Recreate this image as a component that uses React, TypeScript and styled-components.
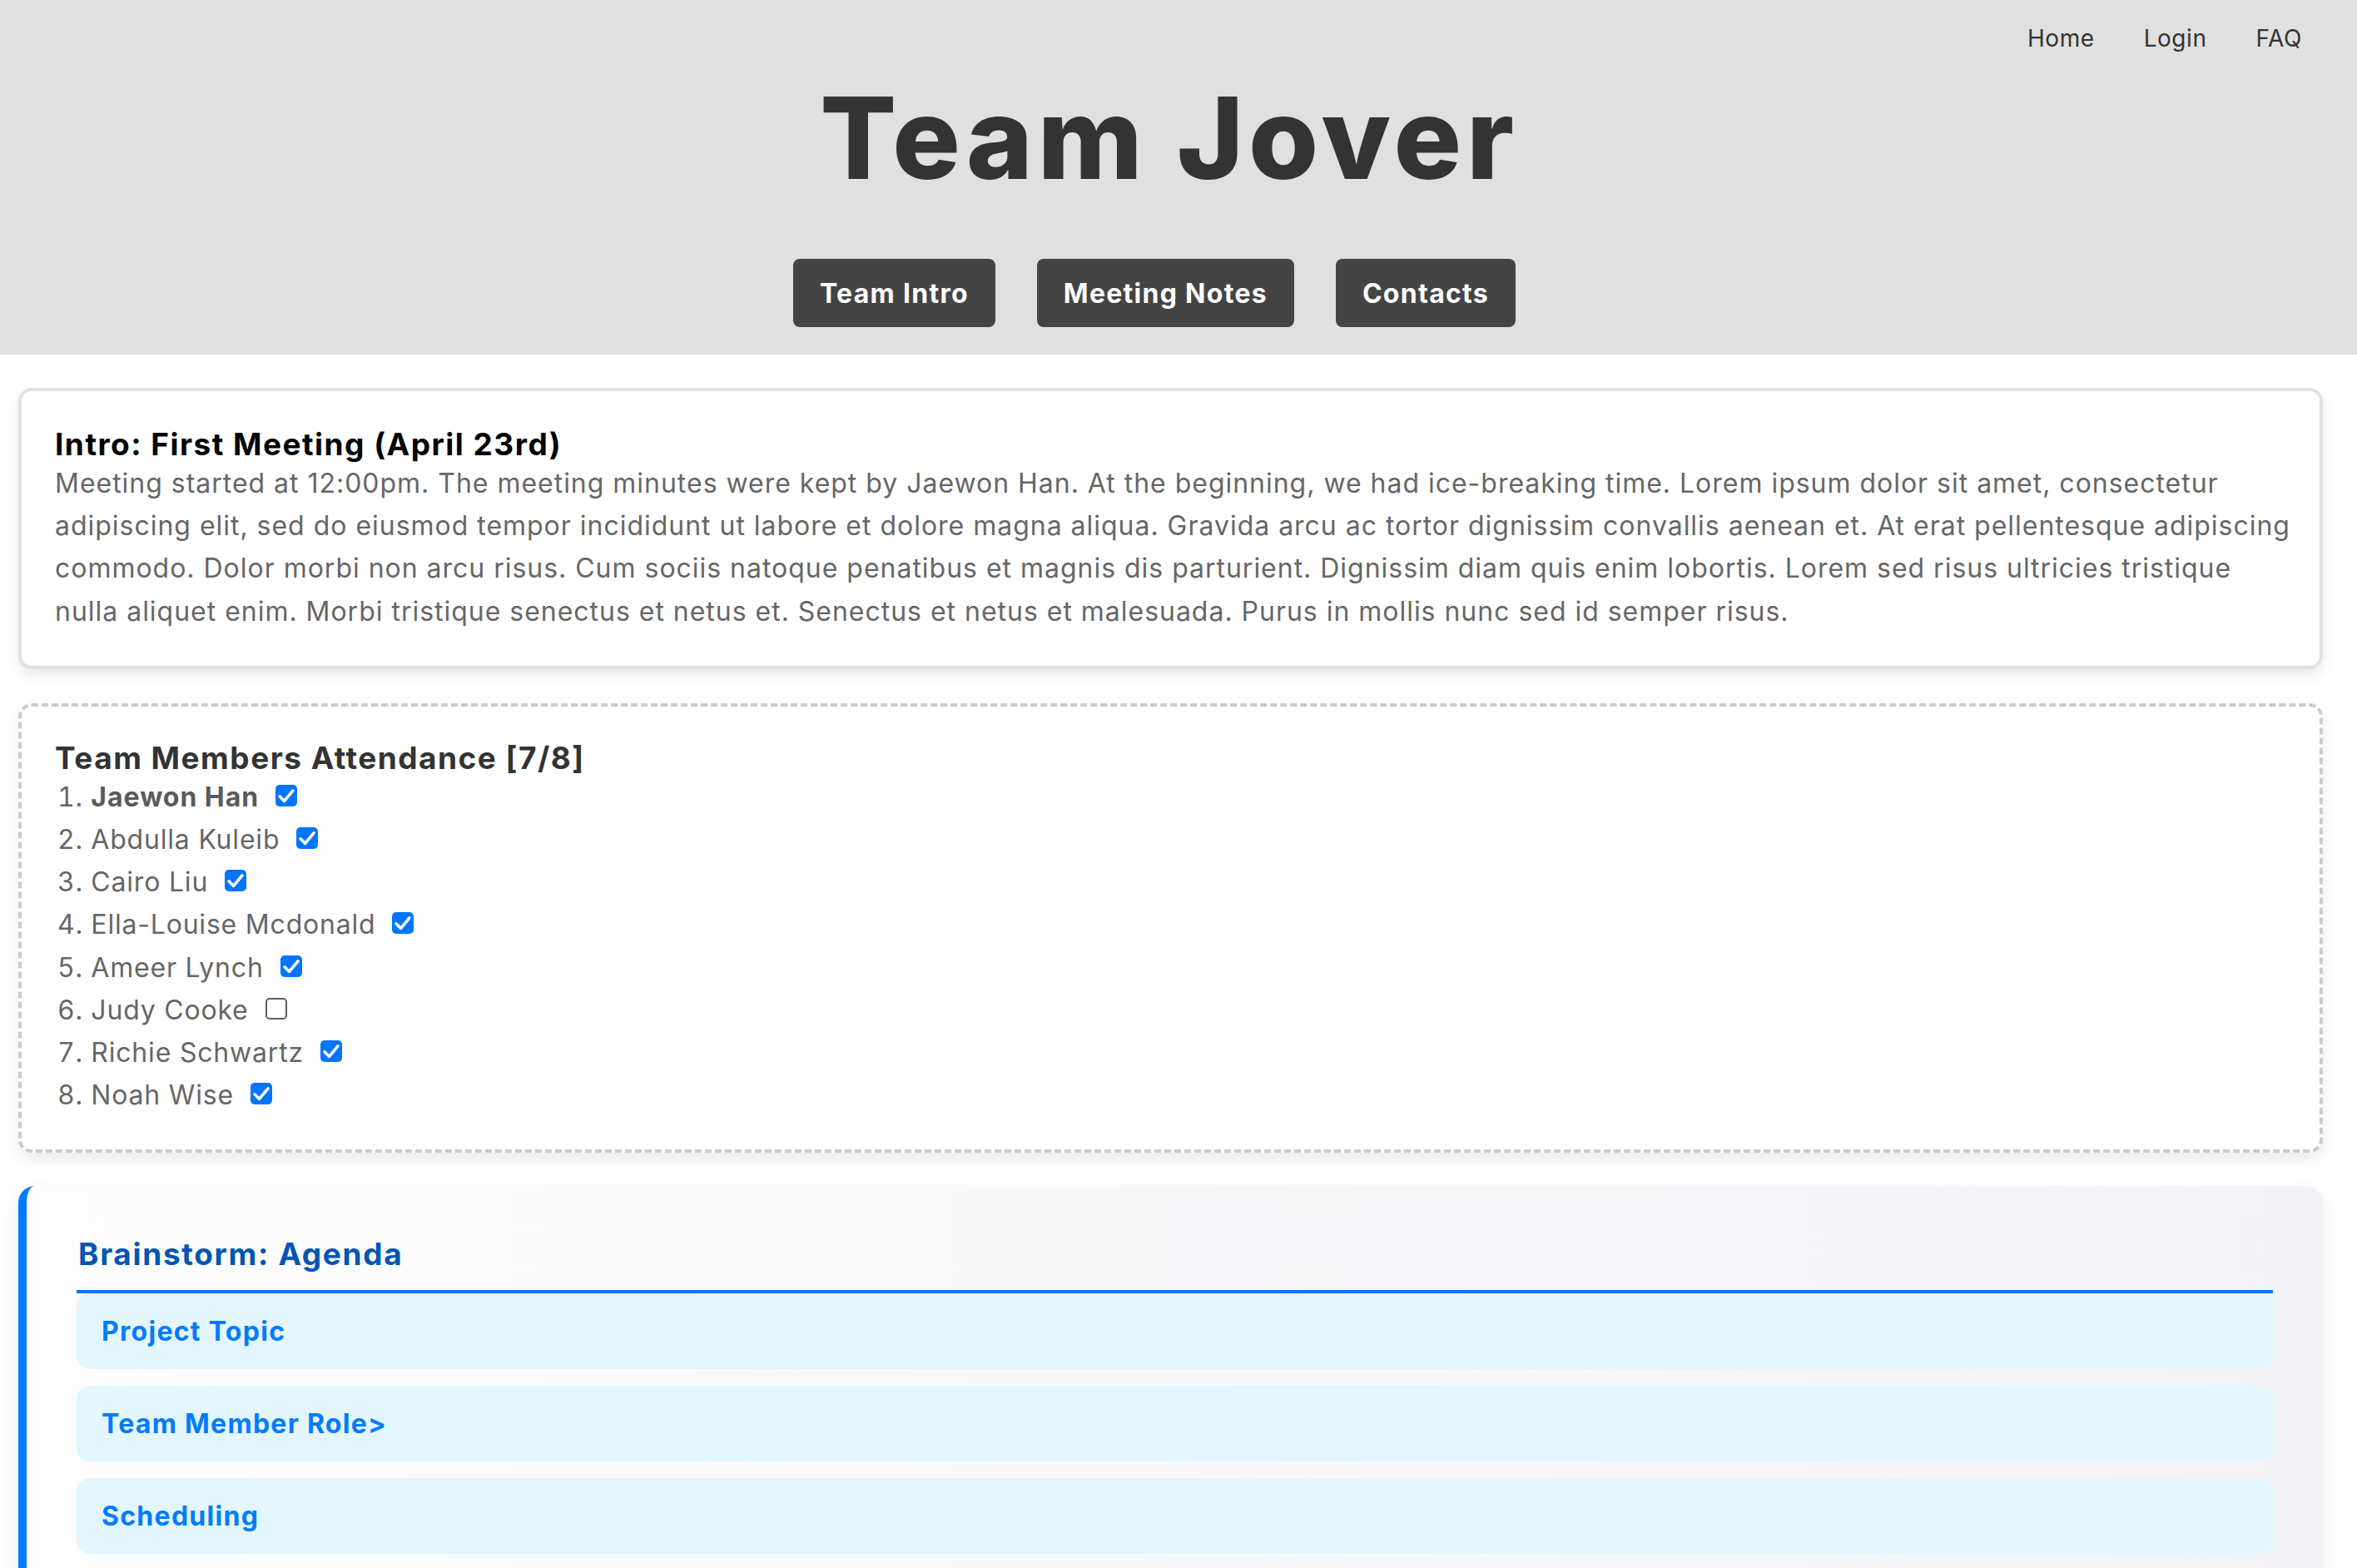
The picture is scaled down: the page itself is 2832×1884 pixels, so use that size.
import React from "react";
import styled, { createGlobalStyle } from "styled-components";

const GlobalStyle = createGlobalStyle`
  html, body { margin: 0; padding: 0; background: #ffffff; }
  body { font-family: Inter, "Open Sans", sans-serif; color: #333333; }
  * { box-sizing: border-box; }
`;

const Header = styled.header`
  background: #e0e0e0;
  height: 426px;
  display: flex;
  flex-direction: column;
`;

const TopNav = styled.nav`
  display: flex;
  justify-content: flex-end;
  gap: 59px;
  padding: 29px 66px 0 0;
`;

const NavLink = styled.a`
  font-size: 28px;
  line-height: 34px;
  color: #333333;
  text-decoration: none;
  letter-spacing: 0.02em;
`;

const Title = styled.h1`
  margin: 35px 0 0;
  padding-right: 22px;
  text-align: center;
  font-size: 136px;
  line-height: 136px;
  font-weight: 800;
  color: #333333;
  letter-spacing: 0.042em;
`;

const ButtonRow = styled.div`
  display: flex;
  justify-content: center;
  gap: 50px;
  margin-top: 77px;
  padding-right: 58px;
`;

const TabButton = styled.button`
  height: 82px;
  padding: 0 32px;
  border: none;
  border-radius: 8px;
  background: #444444;
  color: #ffffff;
  font-family: inherit;
  font-size: 32px;
  font-weight: 700;
  letter-spacing: 0.04em;
  cursor: pointer;
`;

const Main = styled.main`
  display: flex;
  flex-direction: column;
  padding: 40px 41px 0 22px;
`;

const Card = styled.section<{ $dashed?: boolean; $gapTop?: number }>`
  background: #ffffff;
  border: 4px ${(p) => (p.$dashed ? "dashed #cccccc" : "solid #e2e2e2")};
  border-radius: 16px;
  padding: ${(p) => (p.$dashed ? "41px 40px 40px" : "43px 40px 40px")};
  margin-top: ${(p) => p.$gapTop ?? 0}px;
  box-shadow: 0 8px 16px rgba(0, 0, 0, 0.08);
`;

const CardHeading = styled.h3<{ $color?: string }>`
  margin: 0;
  font-size: 37px;
  line-height: 42px;
  font-weight: 700;
  color: ${(p) => p.$color ?? "#333333"};
  letter-spacing: 0.04em;
`;

const Paragraph = styled.p`
  margin: 0;
  font-size: 32px;
  line-height: 51.2px;
  color: #666666;
  letter-spacing: 0.98px;
`;

const Line = styled.span`
  display: block;
  white-space: nowrap;
`;

const MemberList = styled.ol`
  margin: 0;
  padding: 0 0 0 3px;
  list-style: decimal inside;
`;

const Member = styled.li`
  font-size: 32px;
  line-height: 51.2px;
  color: #666666;
  letter-spacing: 0.025em;
`;

const LeadName = styled.strong`
  font-weight: 700;
  color: #5a5a5a;
  letter-spacing: 0.03em;
`;

const CheckBox = styled.span<{ $checked: boolean }>`
  display: inline-block;
  width: 26px;
  height: 26px;
  margin-left: 20px;
  border-radius: 5px;
  background: ${(p) => (p.$checked ? "#0075ff" : "#ffffff")};
  border: ${(p) => (p.$checked ? "none" : "2px solid #5f5f5f")};
  svg { display: block; }
`;

const AgendaCard = styled.section`
  margin-top: 40px;
  border-left: 10px solid #007bff;
  border-radius: 20px;
  padding: 61px 60px 40px;
  background: linear-gradient(90deg, #fdfdfe 0%, #f8f8fa 50%, #f3f2f7 100%);
  box-shadow: 0 8px 24px rgba(0, 0, 0, 0.08);
`;

const AgendaHeading = styled.h3`
  margin: 0;
  padding: 0 0 22px 2px;
  border-bottom: 4px solid #007bff;
  font-size: 37px;
  line-height: 42px;
  font-weight: 700;
  color: #0056b3;
  letter-spacing: 0.045em;
`;

const AgendaList = styled.div`
  display: flex;
  flex-direction: column;
  gap: 20px;
`;

const AgendaItem = styled.div`
  display: flex;
  align-items: center;
  height: 91px;
  padding: 0 30px;
  border-radius: 16px;
  background: #e3f6fd;
  color: #007bff;
  font-size: 32px;
  font-weight: 700;
  letter-spacing: 0.04em;
`;

const Check = ({ checked }: { checked: boolean }) => (
  <CheckBox $checked={checked}>
    {checked && (
      <svg width="26" height="26" viewBox="0 0 26 26">
        <path
          d="M5 13.8 L10.6 19.4 L21 6.8"
          fill="none"
          stroke="#ffffff"
          strokeWidth="3.6"
          strokeLinecap="round"
          strokeLinejoin="round"
        />
      </svg>
    )}
  </CheckBox>
);

const introLines = [
  "Meeting started at 12:00pm. The meeting minutes were kept by Jaewon Han. At the beginning, we had ice-breaking time. Lorem ipsum dolor sit amet, consectetur",
  "adipiscing elit, sed do eiusmod tempor incididunt ut labore et dolore magna aliqua. Gravida arcu ac tortor dignissim convallis aenean et. At erat pellentesque adipiscing",
  "commodo. Dolor morbi non arcu risus. Cum sociis natoque penatibus et magnis dis parturient. Dignissim diam quis enim lobortis. Lorem sed risus ultricies tristique",
  "nulla aliquet enim. Morbi tristique senectus et netus et. Senectus et netus et malesuada. Purus in mollis nunc sed id semper risus.",
];

const members = [
  { name: "Jaewon Han", present: true },
  { name: "Abdulla Kuleib", present: true },
  { name: "Cairo Liu", present: true },
  { name: "Ella-Louise Mcdonald", present: true },
  { name: "Ameer Lynch", present: true },
  { name: "Judy Cooke", present: false },
  { name: "Richie Schwartz", present: true },
  { name: "Noah Wise", present: true },
];

const agenda = ["Project Topic", "Team Member Role>", "Scheduling"];

export default function App() {
  return (
    <>
      <GlobalStyle />
      <Header>
        <TopNav>
          <NavLink href="#">Home</NavLink>
          <NavLink href="#">Login</NavLink>
          <NavLink href="#">FAQ</NavLink>
        </TopNav>
        <Title>Team Jover</Title>
        <ButtonRow>
          <TabButton>Team Intro</TabButton>
          <TabButton>Meeting Notes</TabButton>
          <TabButton>Contacts</TabButton>
        </ButtonRow>
      </Header>
      <Main>
        <Card>
          <CardHeading $color="#000000">Intro: First Meeting (April 23rd)</CardHeading>
          <Paragraph>
            {introLines.map((l) => (
              <Line key={l}>{l}</Line>
            ))}
          </Paragraph>
        </Card>
        <Card $dashed $gapTop={41}>
          <CardHeading>Team Members Attendance [7/8]</CardHeading>
          <MemberList>
            {members.map((m, i) => (
              <Member key={m.name}>
                {i === 0 ? <LeadName>{m.name}</LeadName> : m.name}
                <Check checked={m.present} />
              </Member>
            ))}
          </MemberList>
        </Card>
        <AgendaCard>
          <AgendaHeading>Brainstorm: Agenda</AgendaHeading>
          <AgendaList>
            {agenda.map((a) => (
              <AgendaItem key={a}>{a}</AgendaItem>
            ))}
          </AgendaList>
        </AgendaCard>
      </Main>
    </>
  );
}
